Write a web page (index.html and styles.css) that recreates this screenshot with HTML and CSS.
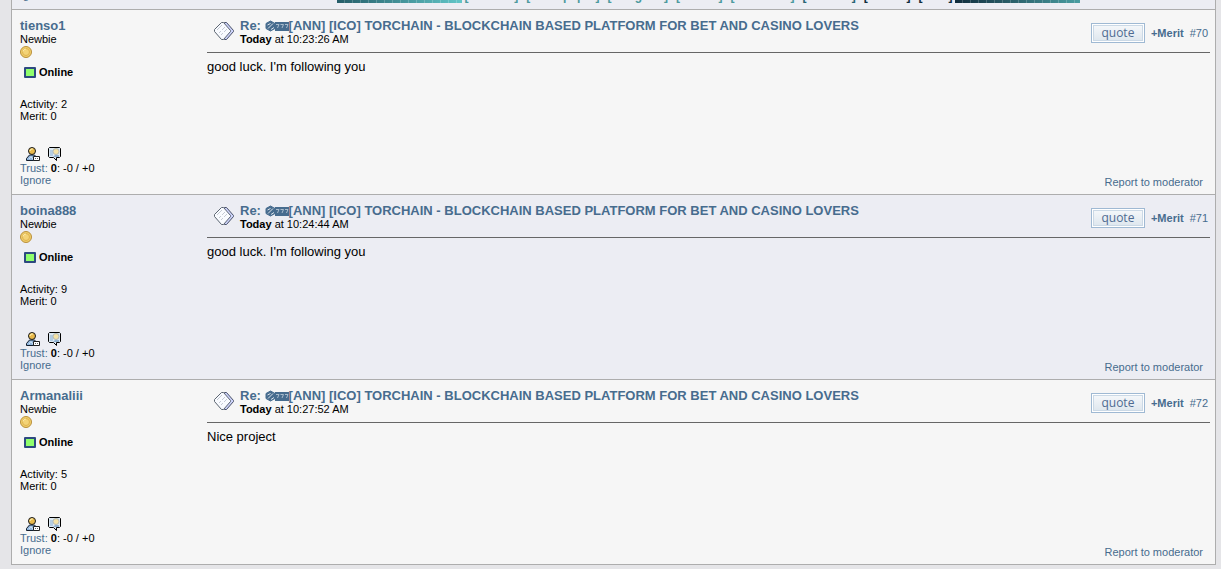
FILE: index.html
```html
<!DOCTYPE html>
<html lang="en">
<head>
    <meta charset="UTF-8">
    <meta name="viewport" content="width=device-width, initial-scale=1.0">
    <title>[ANN] [ICO] TORCHAIN</title>
    <link rel="stylesheet" href="styles.css">
</head>
<body>
    <svg class="sprites" aria-hidden="true">
        <symbol id="coin" viewBox="0 0 12 12">
            <circle cx="6" cy="6" r="5.5" fill="#f0cf6a" stroke="#b98f3c"/>
            <circle cx="6" cy="6" r="3.5" fill="#f3d377" stroke="#dfb24e"/>
            <path d="M3 5.500a3 3 0 0 1 3-2.500" fill="none" stroke="#fbe9a8"/>
        </symbol>
        <symbol id="post" viewBox="0 0 22 20">
            <path d="M11.500 1.500h2l7 8v1l-7 8h-2z" fill="#ccd2fa" stroke="#4a5268"/>
            <path d="M1.500 8.500l7-7h2l7 8v1l-7 8h-2l-7-8z" fill="#f9fbff" stroke="#5a6470"/>
            <path d="M4 9l5-5M6 12l2-2m1-1l3-3M8 14l2-2m1-1l3-3" fill="none" stroke="#c4cad4"/>
        </symbol>
        <symbol id="profile" viewBox="0 0 16 16">
            <path d="M1.500 14.500v-2l3-3.500h5l3 3.500v2z" fill="#8fb4da" stroke="#111c2c"/>
            <circle cx="7" cy="5" r="3.500" fill="#e9b94a" stroke="#17191c"/>
            <path d="M5 5V4h1V3h2" fill="none" stroke="#fff0a9"/>
            <path d="M4 13l2-2.500 2 3" fill="none" stroke="#d6e9fa"/>
            <path d="M8.500 10.500h6v4h-6z" fill="#fff" stroke="#202020"/>
            <path d="M10 12.500h1m1 0h1" stroke="#666"/>
        </symbol>
        <symbol id="message" viewBox="0 0 16 16">
            <path d="M2.500 1.500h10l1 1v8l-1 1H9.500v3l-3-3h-4l-1-1v-8z" fill="#dce9f3" stroke="#000"/>
            <path d="M3 4h3v6H3z" fill="#b4cde2"/>
            <circle cx="9" cy="5.500" r="3" fill="#f4e2a6" stroke="#b2b9b8"/>
            <path d="M6 11l2-2h4v2z" fill="#8fb0cf"/>
        </symbol>
        <symbol id="dice" viewBox="0 0 24 12">
            <path d="M5.500 1L10 3.500v5L5.500 11 1 8.500v-5z" fill="#476c8e" stroke="#476c8e"/>
            <path d="M2.500 5l3-1.500M3 8.500l5-5M6 9.500l3-2" fill="none" stroke="#dbe3eb"/>
            <path d="M10 2h14v9H10z" fill="#476c8e"/>
            <path d="M11 4.500h3L12.500 8M15.500 4.500h3L17 8M20 4.500h3L21.500 8" fill="none" stroke="#a9bccd"/>
        </symbol>
    </svg>

    <main class="posts">
        <article class="post previous">
            <div class="poster">
                <a href="#">Ignore</a>
            </div>
            <div class="signature">
                <span class="bar"></span>
                <a href="#">[Website]</a>
                <a href="#">[Whitepaper]</a>
                <a href="#">[Telegram]</a>
                <a href="#">[Twitter]</a>
                <a href="#">[Facebook]</a>
                <a class="deep" href="#">[Medium]</a>
                <a class="dark" href="#">[Github]</a>
                <a class="dark" href="#">[ANN]</a>
                <span class="bar dark-bar"></span>
            </div>
        </article>

        <article class="post">
            <div class="poster">
                <a class="name" href="#">tienso1</a>
                <span>Newbie</span>
                <svg class="coin"><use href="#coin"/></svg>
                <div class="online"><i></i><b>Online</b></div>
                <div class="stats">Activity: 2<br>Merit: 0</div>
                <div class="contact">
                    <a href="#" aria-label="View profile"><svg><use href="#profile"/></svg></a>
                    <a href="#" aria-label="Personal message"><svg><use href="#message"/></svg></a>
                </div>
                <div><a href="#">Trust:</a> <b>0</b>: -0 / +0</div>
                <a href="#">Ignore</a>
            </div>
            <div class="content">
                <header class="head">
                    <svg class="post-icon"><use href="#post"/></svg>
                    <div class="subject">
                        <a class="name" href="#">Re: <svg class="dice"><use href="#dice"/></svg>[ANN] [ICO] TORCHAIN - BLOCKCHAIN BASED PLATFORM FOR BET AND CASINO LOVERS</a>
                        <div><b>Today</b> at 10:23:26 AM</div>
                    </div>
                    <div class="actions">
                        <button type="button" class="quote">quote</button>
                        <a class="merit" href="#">+Merit</a>
                        <a href="#">#70</a>
                    </div>
                </header>
                <p class="message">good luck. I'm following you</p>
                <a class="report" href="#">Report to moderator</a>
            </div>
        </article>

        <article class="post alt">
            <div class="poster">
                <a class="name" href="#">boina888</a>
                <span>Newbie</span>
                <svg class="coin"><use href="#coin"/></svg>
                <div class="online"><i></i><b>Online</b></div>
                <div class="stats">Activity: 9<br>Merit: 0</div>
                <div class="contact">
                    <a href="#" aria-label="View profile"><svg><use href="#profile"/></svg></a>
                    <a href="#" aria-label="Personal message"><svg><use href="#message"/></svg></a>
                </div>
                <div><a href="#">Trust:</a> <b>0</b>: -0 / +0</div>
                <a href="#">Ignore</a>
            </div>
            <div class="content">
                <header class="head">
                    <svg class="post-icon"><use href="#post"/></svg>
                    <div class="subject">
                        <a class="name" href="#">Re: <svg class="dice"><use href="#dice"/></svg>[ANN] [ICO] TORCHAIN - BLOCKCHAIN BASED PLATFORM FOR BET AND CASINO LOVERS</a>
                        <div><b>Today</b> at 10:24:44 AM</div>
                    </div>
                    <div class="actions">
                        <button type="button" class="quote">quote</button>
                        <a class="merit" href="#">+Merit</a>
                        <a href="#">#71</a>
                    </div>
                </header>
                <p class="message">good luck. I'm following you</p>
                <a class="report" href="#">Report to moderator</a>
            </div>
        </article>

        <article class="post">
            <div class="poster">
                <a class="name" href="#">Armanaliii</a>
                <span>Newbie</span>
                <svg class="coin"><use href="#coin"/></svg>
                <div class="online"><i></i><b>Online</b></div>
                <div class="stats">Activity: 5<br>Merit: 0</div>
                <div class="contact">
                    <a href="#" aria-label="View profile"><svg><use href="#profile"/></svg></a>
                    <a href="#" aria-label="Personal message"><svg><use href="#message"/></svg></a>
                </div>
                <div><a href="#">Trust:</a> <b>0</b>: -0 / +0</div>
                <a href="#">Ignore</a>
            </div>
            <div class="content">
                <header class="head">
                    <svg class="post-icon"><use href="#post"/></svg>
                    <div class="subject">
                        <a class="name" href="#">Re: <svg class="dice"><use href="#dice"/></svg>[ANN] [ICO] TORCHAIN - BLOCKCHAIN BASED PLATFORM FOR BET AND CASINO LOVERS</a>
                        <div><b>Today</b> at 10:27:52 AM</div>
                    </div>
                    <div class="actions">
                        <button type="button" class="quote">quote</button>
                        <a class="merit" href="#">+Merit</a>
                        <a href="#">#72</a>
                    </div>
                </header>
                <p class="message">Nice project</p>
                <a class="report" href="#">Report to moderator</a>
            </div>
        </article>
    </main>
</body>
</html>
```

FILE: styles.css
```css
* {
    box-sizing: border-box;
}
body {
    margin: 0;
    padding: 0 5px 4px 11px;
    background-color: #e5e5e8;
    color: #000;
    font-family: "Liberation Sans", Arial, sans-serif;
    font-size: 11px;
    line-height: 12px;
}
a {
    color: #476c8e;
    text-decoration: none;
}
svg {
    display: block;
}
.sprites {
    display: none;
}
.posts {
    border: 1px solid #adadad;
    border-top: 0;
}
.post {
    display: flex;
    padding: 8px 5px 8px 8px;
    background-color: #f6f6f6;
}
.post + .post {
    border-top: 1px solid #adadad;
}
.post.alt,
.post.previous {
    background-color: #ecedf3;
}
.poster {
    flex: 0 0 187px;
    display: flex;
    flex-direction: column;
    align-items: flex-start;
}
.name {
    font-size: 13px;
    line-height: 15px;
    font-weight: bold;
}
.coin {
    width: 12px;
    height: 12px;
    margin-top: 1px;
}
.online {
    display: flex;
    align-items: center;
    gap: 3px;
    margin: 8px 0 20px 4px;
}
.online i {
    width: 12px;
    height: 11px;
    border: 2px solid #2d4a80;
    border-radius: 1px;
    background-color: #90ff6c;
}
.contact {
    display: flex;
    gap: 6px;
    margin: 24px 0 0 5px;
}
.contact svg {
    width: 16px;
    height: 16px;
}

/* Post body */
.content {
    flex: 1;
    display: flex;
    flex-direction: column;
}
.head {
    display: flex;
    align-items: flex-start;
    padding-bottom: 7px;
    border-bottom: 1px solid #666;
}
.post-icon {
    flex: none;
    width: 22px;
    height: 20px;
    margin: 3px 5px 0 6px;
}
.subject {
    flex: 1;
}
.subject .name {
    display: block;
}
.dice {
    display: inline-block;
    width: 24px;
    height: 12px;
    vertical-align: -2px;
}
.actions {
    display: flex;
    align-items: center;
    padding: 5px 2px 0 0;
}
.quote {
    width: 54px;
    height: 20px;
    padding: 0;
    border: 1px solid #9fb9d3;
    background: linear-gradient(#f7f9fb, #dce5ed);
    box-shadow: inset 0 0 0 1px #fff, inset 0 0 0 2px #cbd9e6;
    color: #4f6b91;
    font-family: "Open Sans", sans-serif;
    font-size: 12px;
    line-height: 16px;
}
.merit {
    margin: 0 6px;
    font-weight: bold;
}
.message {
    margin: 6px 0 0;
    font-size: 13px;
    line-height: 15px;
}
.report {
    align-self: flex-end;
    margin: auto 7px -2px 0;
}

/* Tail of the post above */
.previous {
    height: 9px;
    padding-top: 0;
    padding-bottom: 0;
    overflow: hidden;
}
.previous .poster {
    height: 1px;
    justify-content: flex-end;
}
.signature {
    flex: 1;
    display: flex;
    justify-content: center;
    align-items: flex-end;
    gap: 8px;
    height: 3px;
    font-size: 12px;
    font-weight: bold;
}
.signature a {
    margin-bottom: 1px;
    color: #4c9a9e;
}
.signature .deep {
    color: #286474;
}
.signature .dark {
    color: #102c3c;
}
.bar {
    width: 125px;
    height: 12px;
    margin-right: -6px;
    background: repeating-linear-gradient(90deg, transparent 0 7px, rgba(255, 255, 255, 0.2) 7px 8px), linear-gradient(90deg, #245c68, #62c6c8);
}
.dark-bar {
    margin: 0 0 0 -6px;
    background: repeating-linear-gradient(90deg, transparent 0 7px, rgba(255, 255, 255, 0.2) 7px 8px), linear-gradient(90deg, #102c3c, #4a9ea2);
}
```
